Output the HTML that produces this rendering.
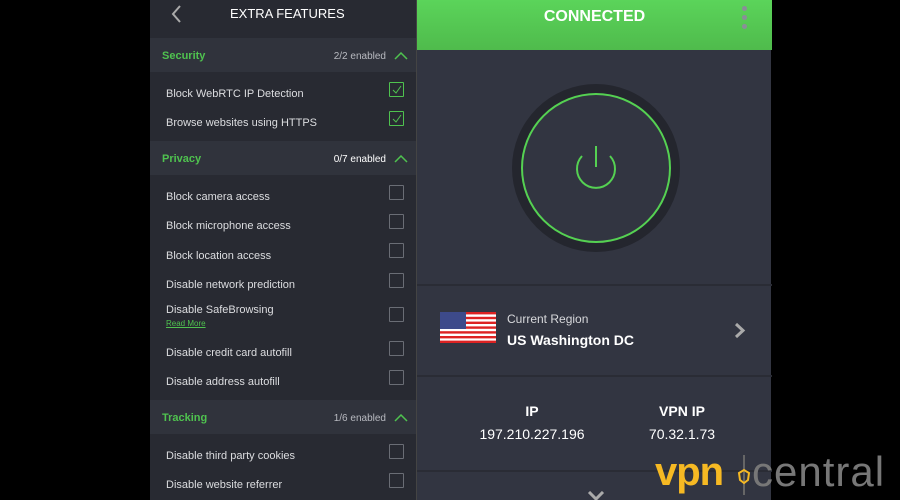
<!DOCTYPE html>
<html><head><style>
*{margin:0;padding:0;box-sizing:border-box}
body{width:900px;height:500px;background:#000;position:relative;overflow:hidden;font-family:"Liberation Sans",sans-serif}
#l{position:absolute;left:150px;top:0;width:266px;height:500px;background:#282a32}
#r{position:absolute;left:416px;top:0;width:355px;height:500px;background:#323541;border-left:1px solid #444}
.t{position:absolute;color:#dcdde0;font-size:11px;left:16px}
.cb{position:absolute;left:239px;width:15px;height:15px;border:1px solid #6a6d75;border-radius:1px}
.cb.on{border-color:#4fc24f}
.sh{position:absolute;left:0;width:266px;height:34px;background:#30333c}
.sh .n{position:absolute;left:12px;top:12px;color:#4fc24f;font-size:11px;font-weight:bold}
.sh .c{position:absolute;right:30px;top:13px;color:#b8bac0;font-size:10px}
.sh svg{position:absolute;right:8px;top:14px}
.sep{position:absolute;left:0;width:355px;height:2px;background:#2a2c35}
</style></head><body>
<div id="l">
<svg style="position:absolute;left:20px;top:5px" width="12" height="18"><path d="M10 1 L3 9 L10 17" stroke="#aaa" stroke-width="2" fill="none"/></svg>
<div style="position:absolute;left:80px;top:6px;color:#fff;font-size:13px">EXTRA FEATURES</div>
<div class="sh" style="top:38px"><span class="n">Security</span><span class="c">2/2 enabled</span><svg width="14" height="8"><path d="M1 7 L7 1 L13 7" stroke="#4fc24f" stroke-width="1.5" fill="none"/></svg></div>
<div class="t" style="top:88px">Block WebRTC IP Detection</div><div class="cb on" style="top:82px"><svg width="13" height="13"><path d="M3 7 L6 10 L11 3" stroke="#4fc24f" fill="none"/></svg></div>
<div class="t" style="top:117px">Browse websites using HTTPS</div><div class="cb on" style="top:111px"><svg width="13" height="13"><path d="M3 7 L6 10 L11 3" stroke="#4fc24f" fill="none"/></svg></div>
<div class="sh" style="top:141px"><span class="n">Privacy</span><span class="c" style="color:#fff">0/7 enabled</span><svg width="14" height="8"><path d="M1 7 L7 1 L13 7" stroke="#4fc24f" stroke-width="1.5" fill="none"/></svg></div>
<div class="t" style="top:191px">Block camera access</div><div class="cb" style="top:185px"></div>
<div class="t" style="top:220px">Block microphone access</div><div class="cb" style="top:214px"></div>
<div class="t" style="top:250px">Block location access</div><div class="cb" style="top:243px"></div>
<div class="t" style="top:279px">Disable network prediction</div><div class="cb" style="top:273px"></div>
<div class="t" style="top:304px">Disable SafeBrowsing</div>
<div class="t" style="top:319px;font-size:8px;color:#4fc24f;text-decoration:underline">Read More</div><div class="cb" style="top:307px"></div>
<div class="t" style="top:347px">Disable credit card autofill</div><div class="cb" style="top:341px"></div>
<div class="t" style="top:376px">Disable address autofill</div><div class="cb" style="top:370px"></div>
<div class="sh" style="top:400px"><span class="n">Tracking</span><span class="c">1/6 enabled</span><svg width="14" height="8"><path d="M1 7 L7 1 L13 7" stroke="#4fc24f" stroke-width="1.5" fill="none"/></svg></div>
<div class="t" style="top:450px">Disable third party cookies</div><div class="cb" style="top:444px"></div>
<div class="t" style="top:479px">Disable website referrer</div><div class="cb" style="top:473px"></div>
</div>
<div id="r">
<div style="position:absolute;left:0;top:0;width:355px;height:50px;background:linear-gradient(#5bd45a,#4fbb4c)"></div>
<div style="position:absolute;left:0;top:8px;width:355px;text-align:center;color:#fff;font-size:16px;font-weight:bold">CONNECTED</div>
<div style="position:absolute;left:325px;top:6px;width:5px;height:5px;border-radius:50%;background:#8a8f98;box-shadow:0 9px 0 #8a8f98,0 18px 0 #8a8f98"></div>
<svg style="position:absolute;left:95px;top:84px" width="168" height="168"><circle cx="84" cy="84" r="84" fill="#24262e"/><circle cx="84" cy="84" r="74" fill="#323541" stroke="#55d152" stroke-width="2"/><path d="M70 72 A19 19 0 1 0 98 72" stroke="#55d152" stroke-width="2" fill="none"/><path d="M84 62 V83" stroke="#55d152" stroke-width="2"/></svg>
<div class="sep" style="top:284px"></div>
<svg style="position:absolute;left:23px;top:312px" width="56" height="31"><rect width="56" height="31" fill="#fff"/><g fill="#d22"><rect y="0" width="56" height="2.4"/><rect y="4.8" width="56" height="2.4"/><rect y="9.6" width="56" height="2.4"/><rect y="14.4" width="56" height="2.4"/><rect y="19.2" width="56" height="2.4"/><rect y="24" width="56" height="2.4"/><rect y="28.6" width="56" height="2.4"/></g><rect width="26" height="17" fill="#3d4a8a"/></svg>
<div style="position:absolute;left:90px;top:312px;color:#d8d9dc;font-size:12px">Current Region</div>
<div style="position:absolute;left:90px;top:332px;color:#fff;font-size:14px;font-weight:bold">US Washington DC</div>
<svg style="position:absolute;left:317px;top:322px" width="12" height="17"><path d="M2 2 L9 8.5 L2 15" stroke="#aaa" stroke-width="3" fill="none"/></svg>
<div class="sep" style="top:375px"></div>
<div style="position:absolute;left:55px;top:403px;width:120px;text-align:center;color:#fff;font-size:14px;font-weight:bold">IP</div>
<div style="position:absolute;left:50px;top:426px;width:130px;text-align:center;color:#fff;font-size:14px">197.210.227.196</div>
<div style="position:absolute;left:205px;top:403px;width:120px;text-align:center;color:#fff;font-size:14px;font-weight:bold">VPN IP</div>
<div style="position:absolute;left:205px;top:426px;width:120px;text-align:center;color:#fff;font-size:14px">70.32.1.73</div>
<div class="sep" style="top:470px"></div>
<svg style="position:absolute;left:170px;top:491px" width="18" height="9"><path d="M2 1 L9 8 L16 1" stroke="#aaa" stroke-width="3" fill="none"/></svg>
</div>
<div style="position:absolute;left:655px;top:450px;color:#f6b923;font-size:40px;font-weight:bold;letter-spacing:-1px">vpn</div>
<svg style="position:absolute;left:735px;top:455px" width="18" height="40"><path d="M9 0 V40" stroke="#666" stroke-width="2"/><path d="M4 18 L9 15 L14 18 L13 25 L9 28 L5 25 Z" stroke="#f6b923" stroke-width="2" fill="none"/></svg>
<div style="position:absolute;left:752px;top:448px;color:#777;font-size:42px;letter-spacing:1px">central</div>
</body></html>
